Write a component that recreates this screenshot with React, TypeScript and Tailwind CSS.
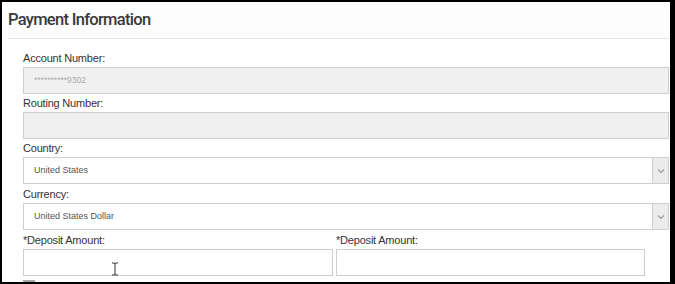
import React from "react";

const labelCls =
  "h-[18px] leading-[18px] text-[11px] text-[#333] font-['Liberation_Sans',Arial,sans-serif] tracking-[-0.2px]";

function Chevron() {
  return (
    <svg width="8" height="6" viewBox="0 0 8 6" fill="none">
      <path d="M1 1.5 L4 4.5 L7 1.5" stroke="#9a9a9a" strokeWidth="1.2" />
    </svg>
  );
}

function SelectBox({ value }: { value: string }) {
  return (
    <div className="flex h-[27px] border border-[#cfcfcf] bg-white">
      <div className="flex-1 pl-[10px] flex items-center text-[9px] text-[#555] font-['Liberation_Sans',Arial,sans-serif]">
        {value}
      </div>
      <div className="w-[16px] flex items-center justify-center bg-[#ececec] border-l border-[#d0d0d0]">
        <Chevron />
      </div>
    </div>
  );
}

export default function App() {
  return (
    <div className="w-[675px] h-[284px] overflow-hidden bg-white border-black border-l-2 border-t-2 border-r-[5px] border-b-[2px]">
      <div className="ml-[6px] h-[37px] border-b border-[#e8e8e8] flex items-center bg-[#fdfdfd]">
        <h1 className="text-[16.5px] font-medium text-[#3a3a3a] font-['Roboto',sans-serif] tracking-[-0.7px]">
          Payment Information
        </h1>
      </div>
      <div className="pl-[21px] pr-[1px] pt-[10px]">
        <div className={labelCls}>Account Number:</div>
        <div className="h-[27px] border border-[#cfcfcf] bg-[#f0f0f0] pl-[10px] flex items-center text-[8.5px] text-[#aaa] font-['Liberation_Sans',Arial,sans-serif]">
          **********9302
        </div>
        <div className={labelCls}>Routing Number:</div>
        <div className="h-[27px] border border-[#cfcfcf] bg-[#f0f0f0]" />
        <div className={labelCls}>Country:</div>
        <SelectBox value="United States" />
        <div className={labelCls + " mt-[1px]"}>Currency:</div>
        <SelectBox value="United States Dollar" />
        <div className="grid grid-cols-[310px_309px] gap-x-[3px] mt-[1px]">
          <div className={labelCls}>*Deposit Amount:</div>
          <div className={labelCls}>*Deposit Amount:</div>
          <div className="relative h-[27px] border border-[#cfcfcf] bg-white">
            <svg
              className="absolute left-[87px] top-[12px]"
              width="8"
              height="14"
              viewBox="0 0 8 14"
              fill="none"
            >
              <path
                d="M1 1 H3 M5 1 H7 M4 1.5 V12.5 M1 13 H3 M5 13 H7 M3 1 Q4 1.2 4 2 Q4 1.2 5 1 M3 13 Q4 12.8 4 12 Q4 12.8 5 13"
                stroke="#333"
                strokeWidth="1"
              />
            </svg>
          </div>
          <div className="h-[27px] border border-[#cfcfcf] bg-white" />
        </div>
        <div className="mt-[4px] w-[12px] h-[12px] bg-[#a8a8a8]" />
      </div>
    </div>
  );
}
